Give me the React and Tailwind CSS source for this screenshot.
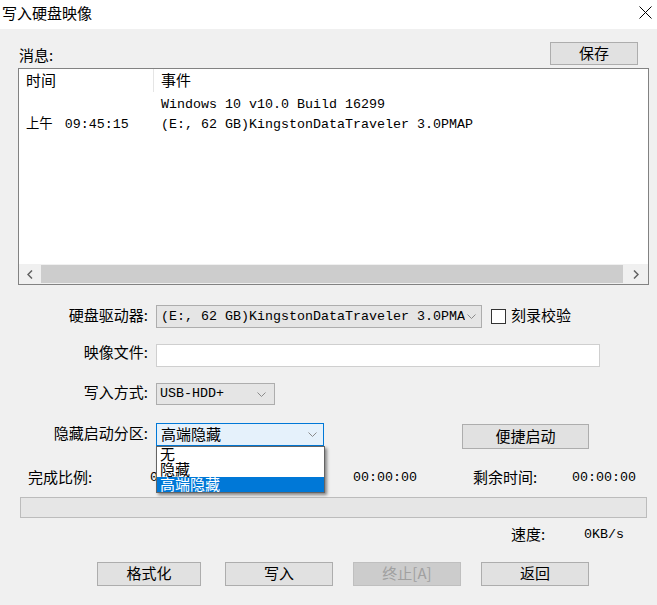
import React from "react";

const cjk = "font-['Noto_Sans_CJK_SC',sans-serif]";
const mono = "font-['Liberation_Mono','Noto_Sans_CJK_SC',monospace]";

function Chevron() {
  return (
    <svg width="9" height="5" viewBox="0 0 9 5" className="shrink-0">
      <polyline points="0.5,0.5 4.5,4.5 8.5,0.5" fill="none" stroke="#8a8a8a" strokeWidth="1" />
    </svg>
  );
}

function Button({ children, disabled, className = "" }) {
  return (
    <button
      className={`flex items-center justify-center border text-[15px] leading-[18px] ${cjk} ${
        disabled
          ? "bg-[#cccccc] border-[#bfbfbf] text-[#a0a0a0]"
          : "bg-[#e1e1e1] border-[#adadad] text-black"
      } ${className}`}
      disabled={disabled}
    >
      <span className="-translate-y-[1px]">{children}</span>
    </button>
  );
}

function Label({ children, className = "-translate-y-[2px]" }) {
  return (
    <div className={`w-[138px] shrink-0 pr-[8px] text-right text-[15px] leading-[18px] ${cjk} ${className}`}>
      {children}
    </div>
  );
}

export default function App() {
  return (
    <div className="w-[657px] h-[605px] bg-[#f0f0f0] flex flex-col text-black overflow-hidden">
      {/* title bar */}
      <div className="h-[29px] bg-white flex items-center justify-between pl-[2px] pr-[5px] shrink-0">
        <span className={`text-[15px] leading-[18px] pb-[3px] ${cjk}`}>写入硬盘映像</span>
        <svg width="13" height="13" viewBox="0 0 13 13" className="mb-[4px]">
          <path d="M0.5 0.5 L12.5 12.5 M12.5 0.5 L0.5 12.5" stroke="#000" strokeWidth="1" />
        </svg>
      </div>

      <div className="pl-[18px] flex flex-col">
        {/* messages header */}
        <div className="mt-[13px] h-[23px] w-[631px] flex items-end justify-between">
          <span className={`pl-[1px] pb-[1px] text-[15px] leading-[18px] ${cjk}`}>消息:</span>
          <Button className="w-[88px] h-[23px] mr-[11px]">保存</Button>
        </div>

        {/* list view */}
        <div className="mt-[3px] w-[631px] h-[217px] border border-[#828282] bg-white flex flex-col">
          <div className={`h-[23px] flex items-center text-[15px] ${cjk}`}>
            <div className="w-[135px] h-full pl-[7px] pb-[1px] flex items-center border-r border-[#e5e5e5]">时间</div>
            <div className="pl-[7px] pb-[1px]">事件</div>
          </div>
          <div className={`mt-[3px] h-[20px] flex items-center text-[13.33px] ${mono}`}>
            <div className="w-[136px] pl-[7px]"></div>
            <div className="pl-[6px] whitespace-pre">Windows 10 v10.0 Build 16299</div>
          </div>
          <div className={`h-[20px] flex items-center text-[13.33px] ${mono}`}>
            <div className="w-[136px] pl-[7px] whitespace-pre">
              <span className="mr-[12px]">上午</span>09:45:15
            </div>
            <div className="pl-[6px] whitespace-pre">(E:, 62 GB)KingstonDataTraveler 3.0PMAP</div>
          </div>
          <div className="flex-1" />
          <div className="h-[20px] flex bg-[#f0f0f0]">
            <div className="w-[22px] flex items-center justify-center">
              <svg width="6" height="9" viewBox="0 0 6 9">
                <polyline points="5,0.5 1,4.5 5,8.5" fill="none" stroke="#606060" strokeWidth="1.5" />
              </svg>
            </div>
            <div className="flex-1 bg-[#cdcdcd] my-[1px]" />
            <div className="w-[25px] flex items-center justify-center">
              <svg width="6" height="9" viewBox="0 0 6 9">
                <polyline points="1,0.5 5,4.5 1,8.5" fill="none" stroke="#606060" strokeWidth="1.5" />
              </svg>
            </div>
          </div>
        </div>

        {/* drive */}
        <div className="mt-[20px] h-[23px] flex items-center">
          <Label>硬盘驱动器:</Label>
          <div className="w-[326px] h-[23px] bg-[#e5e5e5] border border-[#adadad] flex items-center pl-[4px] pr-[5px] gap-[2px]">
            <span className={`flex-1 overflow-hidden whitespace-pre text-[13.33px] ${mono}`}>
              (E:, 62 GB)KingstonDataTraveler 3.0PMAP
            </span>
            <Chevron />
          </div>
          <div className="ml-[9px] w-[15px] h-[15px] border border-[#333333] bg-white" />
          <span className={`ml-[5px] -translate-y-[2px] text-[15px] leading-[18px] ${cjk}`}>刻录校验</span>
        </div>

        {/* image file */}
        <div className="mt-[16px] h-[23px] flex items-center">
          <Label className="-translate-y-[4px]">映像文件:</Label>
          <div className="w-[444px] h-[23px] bg-white border border-[#cfcfcf]" />
        </div>

        {/* write mode */}
        <div className="mt-[16px] h-[22px] flex items-center">
          <Label>写入方式:</Label>
          <div className="w-[119px] h-[22px] bg-[#e5e5e5] border border-[#adadad] flex items-center pl-[3px] pr-[8px]">
            <span className={`flex-1 text-[13.33px] ${mono}`}>USB-HDD+</span>
            <Chevron />
          </div>
        </div>

        {/* hidden partition */}
        <div className="mt-[18px] h-[26px] flex items-start">
          <div className="h-[23px] flex items-center">
            <Label>隐藏启动分区:</Label>
          </div>
          <div className="relative w-[168px] h-[23px] bg-[#e5f1fb] border border-[#0078d7] flex items-center pl-[4px] pr-[6px] z-10">
            <span className={`flex-1 -translate-y-[1px] text-[15px] leading-[18px] ${cjk}`}>高端隐藏</span>
            <Chevron />
            <div className="absolute top-[22px] left-[-1px] w-[169px] bg-white border border-[#646464] shadow-[2px_2px_3px_rgba(0,0,0,0.45)]">
              <div className={`h-[15px] pl-[3px] text-[15px] leading-[14px] ${cjk}`}>无</div>
              <div className={`h-[15px] pl-[3px] text-[15px] leading-[14px] ${cjk}`}>隐藏</div>
              <div className={`h-[15px] pl-[3px] text-[15px] leading-[14px] bg-[#0078d7] text-white ${cjk}`}>高端隐藏</div>
            </div>
          </div>
          <Button className="ml-[138px] mt-[1px] w-[127px] h-[25px]">便捷启动</Button>
        </div>

        {/* progress info */}
        <div className="mt-[17px] h-[24px] flex items-center">
          <span className={`ml-[10px] w-[122px] -translate-y-[1px] text-[15px] leading-[18px] ${cjk}`}>完成比例:</span>
          <span className={`w-[203px] text-[13.33px] ${mono}`}>0%</span>
          <span className={`w-[120px] text-[13.33px] ${mono}`}>00:00:00</span>
          <span className={`w-[99px] -translate-y-[1px] text-[15px] leading-[18px] ${cjk}`}>剩余时间:</span>
          <span className={`text-[13.33px] ${mono}`}>00:00:00</span>
        </div>

        <div className="mt-[7px] ml-[2px] w-[627px] h-[21px] bg-[#e6e6e6] border border-[#bcbcbc]" />

        <div className="mt-[7px] h-[20px] flex items-center">
          <span className={`ml-[493px] w-[73px] -translate-y-[1px] text-[15px] leading-[18px] ${cjk}`}>速度:</span>
          <span className={`text-[13.33px] ${mono}`}>0KB/s</span>
        </div>

        {/* buttons */}
        <div className="mt-[17px] flex items-center">
          <Button className="ml-[79px] w-[104px] h-[24px]">格式化</Button>
          <Button className="ml-[24px] w-[108px] h-[24px]">写入</Button>
          <Button disabled className="ml-[20px] w-[108px] h-[24px]">终止[A]</Button>
          <Button className="ml-[20px] w-[108px] h-[24px]">返回</Button>
        </div>
      </div>
    </div>
  );
}
